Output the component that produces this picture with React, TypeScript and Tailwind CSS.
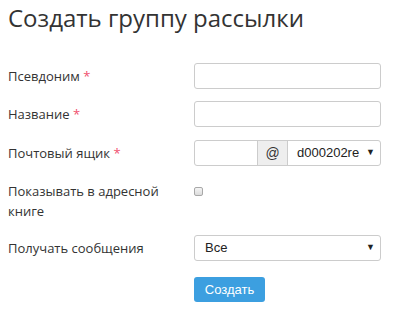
import React from "react";

const labelCls = "w-[186px] shrink-0 text-[13px] leading-[20px] text-[#333]";
const star = <span className="text-[#f0506e]"> *</span>;

export default function App() {
  return (
    <div className="w-[397px] h-[314px] bg-white relative" style={{ fontFamily: '"Open Sans", "Noto Sans", sans-serif' }}>
      <div className="pl-[8px] pt-[1px]">
        <h1 className="text-[24px] leading-[34px] text-[#333] font-normal">Создать группу рассылки</h1>
        <div className="flex items-center mt-[28px]">
          <div className={labelCls}>Псевдоним{star}</div>
          <div className="w-[187px] h-[26px] border border-[#ccc] rounded-[3px] bg-white" />
        </div>
        <div className="flex items-center mt-[12px]">
          <div className={labelCls}>Название{star}</div>
          <div className="w-[187px] h-[26px] border border-[#ccc] rounded-[3px] bg-white" />
        </div>
        <div className="flex items-center mt-[13px]">
          <div className={labelCls}>Почтовый ящик{star}</div>
          <div className="w-[187px] h-[26px] flex border border-[#ccc] rounded-[3px] bg-white overflow-hidden" style={{ fontFamily: '"Liberation Sans", Arial, sans-serif' }}>
            <div className="w-[62px] h-full" />
            <div className="w-[31px] h-full bg-[#eee] border-l border-r border-[#ccc] flex items-center justify-center text-[14px] text-[#333]">@</div>
            <div className="flex-1 h-full flex items-center pl-[9px] pr-[5px] text-[13px] text-[#222]">
              <span className="flex-1">d000202re</span>
              <span className="text-[9px] text-[#222]">▼</span>
            </div>
          </div>
        </div>
        <div className="flex items-start mt-[15px]">
          <div className={labelCls}>Показывать в адресной книге</div>
          <div className="mt-[6px] w-[9px] h-[9px] border border-[#a8a8a8] rounded-[2px] bg-gradient-to-b from-[#f4f4f4] to-[#dcdcdc]" />
        </div>
        <div className="flex items-center mt-[14px]">
          <div className={labelCls}>Получать сообщения</div>
          <div className="w-[187px] h-[26px] border border-[#ccc] rounded-[3px] bg-white flex items-center pl-[10px] pr-[5px] text-[13px] text-[#222]" style={{ fontFamily: '"Liberation Sans", Arial, sans-serif' }}>
            <span className="flex-1">Все</span>
            <span className="text-[9px]">▼</span>
          </div>
        </div>
        <div className="flex mt-[16px]">
          <div className="w-[186px] shrink-0" />
          <div className="w-[71px] h-[25px] rounded-[3px] bg-[#3c9fe0] text-white text-[13px] flex items-center justify-center" style={{ fontFamily: '"Liberation Sans", Arial, sans-serif' }}>Создать</div>
        </div>
      </div>
    </div>
  );
}
